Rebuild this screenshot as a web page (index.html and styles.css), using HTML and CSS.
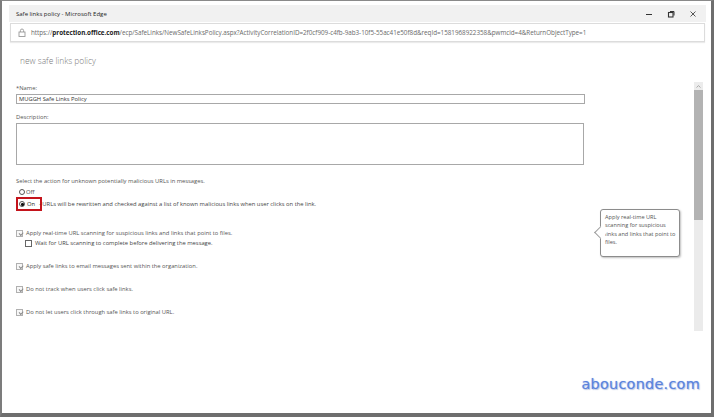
FILE: index.html
```html
<!DOCTYPE html>
<html>
<head>
<meta charset="utf-8">
<link rel="stylesheet" href="styles.css">
</head>
<body>
<div class="screen">
  <div class="window">
    <div class="titlebar">
      <span class="title">Safe links policy - Microsoft Edge</span>
      <div class="controls">
        <svg class="ctl" width="8" height="8" viewBox="0 0 8 8"><path d="M1 4.5h6" stroke="#333" stroke-width="1"/></svg>
        <svg class="ctl" width="8" height="8" viewBox="0 0 8 8"><rect x="1.5" y="2.5" width="4.5" height="4.5" fill="none" stroke="#333" stroke-width="1.1"/><path d="M3 1.5h4v4" fill="none" stroke="#333" stroke-width="1"/></svg>
        <svg class="ctl" width="8" height="8" viewBox="0 0 8 8"><path d="M1.5 1.5l5 5M6.5 1.5l-5 5" stroke="#444" stroke-width="0.9"/></svg>
      </div>
    </div>
    <div class="addressbar">
      <svg class="lock" width="8" height="9" viewBox="0 0 8 9"><rect x="1" y="4" width="6" height="4.5" fill="none" stroke="#999" stroke-width="0.9"/><path d="M2.4 4V2.6a1.6 1.6 0 0 1 3.2 0V4" fill="none" stroke="#999" stroke-width="0.9"/></svg>
      <span class="url">https://<b>protection.office.com</b>/ecp/SafeLinks/NewSafeLinksPolicy.aspx?ActivityCorrelationID=2f0cf909-c4fb-9ab3-10f5-55ac41e50f8d&amp;reqId=1581968922358&amp;pwmcid=4&amp;ReturnObjectType=1</span>
    </div>
    <div class="content">
      <div class="form">
        <h1 class="heading">new safe links policy</h1>
        <label class="label lbl-name">*Name:</label>
        <div class="input">MUGGH Safe Links Policy</div>
        <label class="label lbl-desc">Description:</label>
        <div class="textarea"></div>
        <p class="label lbl-select">Select the action for unknown potentially malicious URLs in messages.</p>
        <div class="radio-row off"><span class="radio"></span><span>Off</span></div>
        <div class="radio-row on">
          <span class="highlight"><span class="radio checked"></span><span>On</span></span><span class="on-text">- URLs will be rewritten and checked against a list of known malicious links when user clicks on the link.</span>
        </div>
        <div class="check-row first"><span class="box checked"></span><span>Apply real-time URL scanning for suspicious links and links that point to files.</span></div>
        <div class="check-row nested"><span class="box empty"></span><span>Wait for URL scanning to complete before delivering the message.</span></div>
        <div class="check-row spaced after-nested"><span class="box checked"></span><span>Apply safe links to email messages sent within the organization.</span></div>
        <div class="check-row spaced"><span class="box checked"></span><span>Do not track when users click safe links.</span></div>
        <div class="check-row spaced"><span class="box checked"></span><span>Do not let users click through safe links to original URL.</span></div>
        <div class="tooltip">Apply real-time URL scanning for suspicious links and links that point to files.</div>
      </div>
      <div class="scrollbar">
        <div class="arrow"><svg width="5" height="3" viewBox="0 0 5 3"><path d="M0.5 2.5L2.5 0.6 4.5 2.5" fill="none" stroke="#999" stroke-width="0.8"/></svg></div>
        <div class="thumb"></div>
        <div class="track"></div>
      </div>
    </div>
    <div class="watermark">abouconde.com</div>
  </div>
</div>
</body>
</html>
```
FILE: styles.css
```css
* { box-sizing: border-box; }
html, body { margin: 0; padding: 0; background: #fff; }
body { font-family: "Open Sans", "Noto Sans", sans-serif; color: #333; }

.screen {
  width: 714px;
  height: 417px;
  border-left: 2px solid #7c7c7c;
  border-top: 1px solid #8a8a8a;
  border-right: 3px solid #6e6e6e;
  border-bottom: 4px solid #6e6e6e;
  padding: 4px 5px 0 7px;
  overflow: hidden;
}

.window {
  height: 100%;
  display: flex;
  flex-direction: column;
  position: relative;
}

.titlebar {
  height: 17px;
  background: #f1f1f1;
  display: flex;
  align-items: center;
  justify-content: space-between;
  padding: 0 6px 0 7px;
}
.title { font-size: 6px; color: #222; font-weight: 400; }
.controls { display: flex; gap: 14px; align-items: center; margin-right: 3px; }
.ctl { display: block; }

.addressbar {
  height: 19px;
  margin: 1px 1px 0 1px;
  border: 1px solid #dcdcdc;
  background: #fff;
  display: flex;
  align-items: center;
  padding-left: 7px;
  gap: 5px;
  box-shadow: 0 1px 1px rgba(0,0,0,0.08);
}
.lock { display: block; }
.url { font-size: 6.3px; color: #6a6a6a; white-space: nowrap; letter-spacing: -0.02px; }
.url b { color: #222; font-weight: 700; }

.content {
  flex: 1;
  display: flex;
  padding-top: 41px;
}
.form {
  flex: 1;
  position: relative;
  padding-left: 7px;
  padding-right: 95px;
  font-size: 5.8px;
  color: #444;
}
.heading {
  position: absolute;
  top: -28px;
  left: 11px;
  margin: 0;
  font-size: 8.4px;
  font-weight: 300;
  color: #7a7a7a;
}
.label { display: block; margin: 0; color: #555; line-height: 7px; white-space: nowrap; }
.lbl-name { margin-top: 2px; }
.input {
  height: 10px;
  width: 569px;
  margin-top: 2px;
  border: 1px solid #a8a8a8;
  padding-left: 2px;
  line-height: 8px;
  color: #333;
}
.lbl-desc { margin-top: 10px; }
.textarea {
  width: 568px;
  height: 42px;
  margin-top: 2px;
  border: 1px solid #a8a8a8;
}
.lbl-select { margin-top: 13px; }

.radio-row { display: flex; align-items: center; height: 8px; color: #444; white-space: nowrap; }
.radio-row.off { margin-top: 3px; padding-left: 3px; gap: 1px; }
.radio-row.on { margin-top: 4px; }
.radio {
  width: 6px; height: 6px;
  border: 0.8px solid #555;
  border-radius: 50%;
  display: inline-block;
  position: relative;
  background: #fff;
  flex: none;
}
.radio.checked::after {
  content: "";
  position: absolute;
  left: 1.2px; top: 1.2px;
  width: 2.6px; height: 2.6px;
  border-radius: 50%;
  background: #111;
}
.highlight {
  display: inline-flex;
  align-items: center;
  gap: 2px;
  height: 14px;
  width: 26px;
  border: 2px solid #c4141c;
  padding-left: 1px;
  color: #222;
  flex: none;
}
.on-text { margin-left: -3px; }

.check-row { display: flex; align-items: center; gap: 3px; height: 8px; color: #555; white-space: nowrap; }
.check-row.first { margin-top: 21px; }
.check-row.nested { margin-top: 2px; padding-left: 9px; color: #444; }
.check-row.spaced { margin-top: 15px; }
.check-row.after-nested { margin-top: 15px; }
.box {
  width: 7px; height: 7px;
  border: 0.8px solid #b0b0b0;
  display: inline-block;
  position: relative;
  background: #f7f7f7;
  flex: none;
}
.box.checked::after {
  content: "";
  position: absolute;
  left: 1.6px;
  top: 1.4px;
  width: 3px; height: 1.6px;
  border-left: 0.8px solid #8a8a8a;
  border-bottom: 0.8px solid #8a8a8a;
  transform: rotate(-45deg);
}
.box.empty { border-color: #666; background: #fff; }

.tooltip {
  position: absolute;
  left: 591px;
  top: 126px;
  width: 80px;
  height: 48px;
  padding: 3px 3px 0 4px;
  background: #fff;
  border: 1px solid #8c8c8c;
  border-radius: 3px;
  box-shadow: 1px 1px 2px rgba(0,0,0,0.25);
  font-size: 5.6px;
  line-height: 8.3px;
  color: #555;
}
.tooltip::before {
  content: "";
  position: absolute;
  left: -5px; top: 18px;
  width: 8px; height: 8px;
  background: #fff;
  border-left: 1px solid #9a9a9a;
  border-bottom: 1px solid #9a9a9a;
  transform: rotate(45deg);
}

.scrollbar {
  width: 9px;
  margin-right: 3px;
  display: flex;
  flex-direction: column;
  margin-top: -1px;
}
.arrow {
  height: 8px;
  background: #ececec;
  display: flex;
  align-items: center;
  justify-content: center;
}
.arrow svg { display: block; }
.thumb { height: 130px; background: #b3b3b3; }
.track { height: 111px; background: #ebebeb; }

.watermark {
  position: absolute;
  right: 6px;
  bottom: 21px;
  font-family: "DejaVu Sans", sans-serif;
  font-size: 14.5px;
  color: #5b83dc;
  text-shadow: 0 0 1px #9ab4ef, 1px 1px 1px rgba(60,90,170,0.35);
  letter-spacing: 0.2px;
}
```
